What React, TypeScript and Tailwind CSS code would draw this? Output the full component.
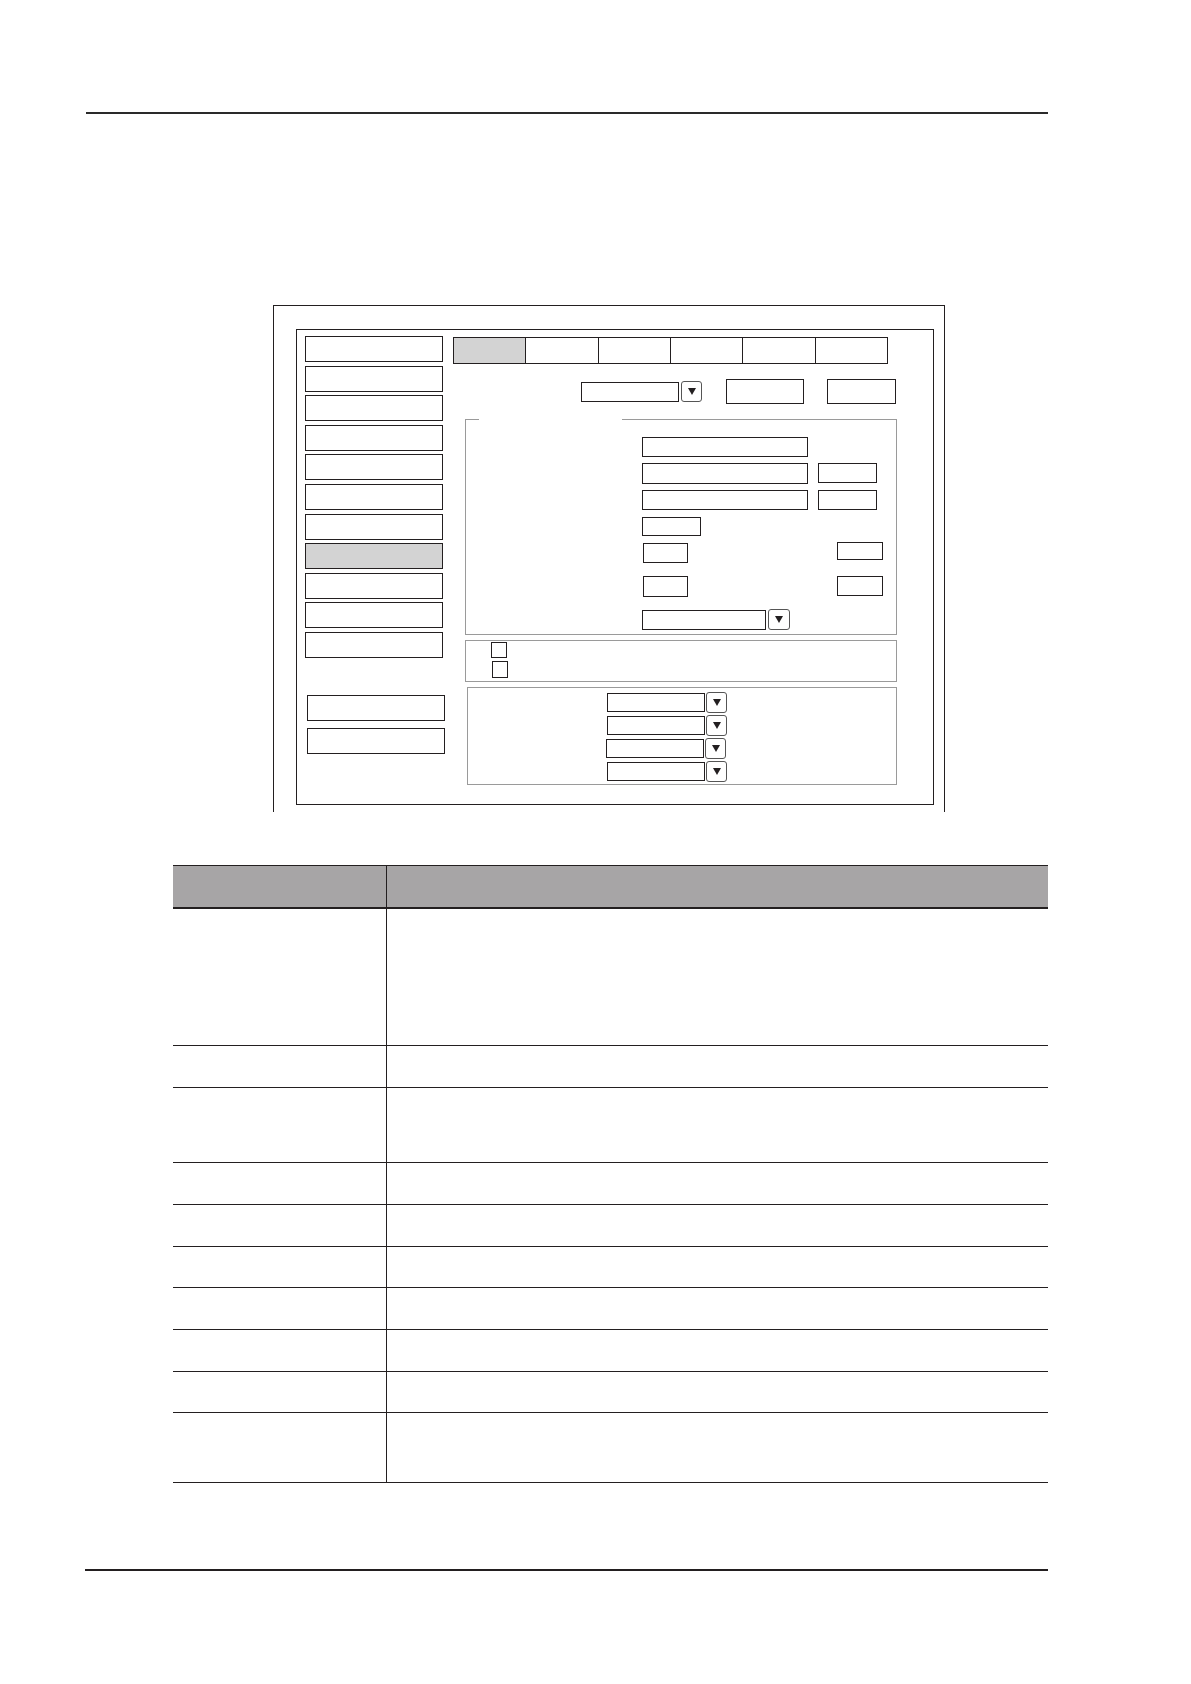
import React from 'react'

const line = 'border-[#231f20]'

function Arrow({ className = '' }: { className?: string }) {
  return (
    <div className={`flex items-center justify-center rounded-[3px] border border-[#555] bg-white ${className}`}>
      <svg width="8" height="7" viewBox="0 0 8 7">
        <polygon points="0,0 8,0 4,7" fill="#231f20" />
      </svg>
    </div>
  )
}

function Box({ className = '' }: { className?: string }) {
  return <div className={`border ${line} bg-white ${className}`} />
}

const tabs = [0, 1, 2, 3, 4, 5]
const sideButtons = [0, 1, 2, 3, 4, 5, 6, 7, 8, 9, 10]
const lowerSelects = [0, 1, 2, 3]

const rows = [
  'h-[137px]',
  'h-[42px]',
  'h-[75px]',
  'h-[42px]',
  'h-[42px]',
  'h-[41px]',
  'h-[42px]',
  'h-[42px]',
  'h-[41px]',
  'h-[70px]',
]

function Diagram() {
  return (
    <div className={`ml-[273px] mt-[191px] h-[507px] w-[672px] border-l border-r border-t ${line} pl-[22px] pt-[23px]`}>
      <div className={`flex h-[476px] w-[638px] border ${line} pl-[8px] pt-[6px]`}>
        {/* left menu */}
        <div className="flex w-[140px] flex-col">
          <div className="flex flex-col gap-[3.6px]">
            {sideButtons.map((i) => (
              <Box key={i} className={`h-[26px] w-[138px] ${i === 7 ? 'bg-[#d3d3d3]!' : ''}`} />
            ))}
          </div>
          <div className="ml-[2px] mt-[37px] flex flex-col gap-[7px]">
            <Box className="h-[26px] w-[138px]" />
            <Box className="h-[26px] w-[138px]" />
          </div>
        </div>

        {/* right content */}
        <div className="ml-[8px] mt-[1px] flex flex-col">
          <div className={`flex h-[27px] w-[435px] border ${line}`}>
            {tabs.map((i) => (
              <div
                key={i}
                className={`flex-1 ${i > 0 ? `border-l ${line}` : 'bg-[#d3d3d3]'}`}
              />
            ))}
          </div>

          <div className="mt-[15px] flex h-[25px] items-center pl-[128px]">
            <Box className="h-[20px] w-[98px]" />
            <Arrow className="ml-[2px] h-[21px] w-[21px]" />
            <Box className="ml-[24px] h-[25px] w-[78px]" />
            <Box className="ml-[23px] h-[25px] w-[69px]" />
          </div>

          {/* group 1 */}
          <div className="ml-[12px] mt-[15px] flex h-[216px] w-[432px] flex-col border-b border-l border-r border-[#9a9a9a]">
            <div className="flex h-px">
              <div className="w-[13px] bg-[#9a9a9a]" />
              <div className="w-[143px]" />
              <div className="flex-1 bg-[#9a9a9a]" />
            </div>
            <div className="flex flex-col pl-[176px]">
              <Box className="mt-[17px] h-[20px] w-[166px]" />
              <div className="mt-[6px] flex h-[21px]">
                <Box className="h-[21px] w-[166px]" />
                <Box className="ml-[10px] h-[20px] w-[59px]" />
              </div>
              <div className="mt-[6px] flex h-[20px]">
                <Box className="h-[20px] w-[166px]" />
                <Box className="ml-[10px] h-[20px] w-[59px]" />
              </div>
              <Box className="mt-[7px] h-[19px] w-[59px]" />
              <div className="mt-[6px] flex h-[21px] items-start">
                <Box className="ml-[1px] mt-[1px] h-[20px] w-[45px]" />
                <Box className="ml-[149px] h-[18px] w-[46px]" />
              </div>
              <div className="mt-[13px] flex h-[21px] items-start">
                <Box className="ml-[1px] h-[21px] w-[45px]" />
                <Box className="ml-[149px] h-[20px] w-[46px]" />
              </div>
              <div className="mt-[12px] flex h-[21px] items-center">
                <Box className="h-[20px] w-[124px]" />
                <Arrow className="ml-[2px] h-[21px] w-[22px]" />
              </div>
            </div>
          </div>

          {/* group 2 */}
          <div className="ml-[12px] mt-[5px] flex h-[42px] w-[432px] flex-col gap-[3px] border border-[#9a9a9a] pl-[25px] pt-[1px]">
            <Box className="h-[16px] w-[16px]" />
            <Box className="ml-[1px] h-[17px] w-[16px]" />
          </div>

          {/* group 3 */}
          <div className="ml-[14px] mt-[5px] flex h-[98px] w-[430px] flex-col gap-[3px] border border-[#9a9a9a] pl-[139px] pt-[4px]">
            {lowerSelects.map((i) => (
              <div key={i} className={`flex h-[20px] items-center ${i === 2 ? '-ml-[1px]' : ''}`}>
                <Box className="h-[19px] w-[98px]" />
                <Arrow className="ml-[1px] h-[21px] w-[21px]" />
              </div>
            ))}
          </div>
        </div>
      </div>
    </div>
  )
}

function Table() {
  return (
    <div className="ml-[173px] mt-[53px] w-[875px]">
      <div className={`flex h-[44px] border-b-2 border-t ${line} bg-[#a7a5a6]`}>
        <div className={`w-[214px] border-r ${line}`} />
        <div className="flex-1" />
      </div>
      {rows.map((h, i) => (
        <div key={i} className={`flex ${h} border-b ${line}`}>
          <div className={`w-[214px] border-r ${line}`} />
          <div className="flex-1" />
        </div>
      ))}
    </div>
  )
}

export default function App() {
  return (
    <div className="h-[1684px] w-[1191px] overflow-hidden bg-white font-['Liberation_Sans',sans-serif]">
      <div className="pl-[86px] pt-[112px]">
        <div className="h-[2px] w-[962px] bg-[#2a2a2a]" />
      </div>
      <Diagram />
      <Table />
      <div className="ml-[85px] mt-[86px] h-[2px] w-[963px] bg-[#231f20]" />
    </div>
  )
}
